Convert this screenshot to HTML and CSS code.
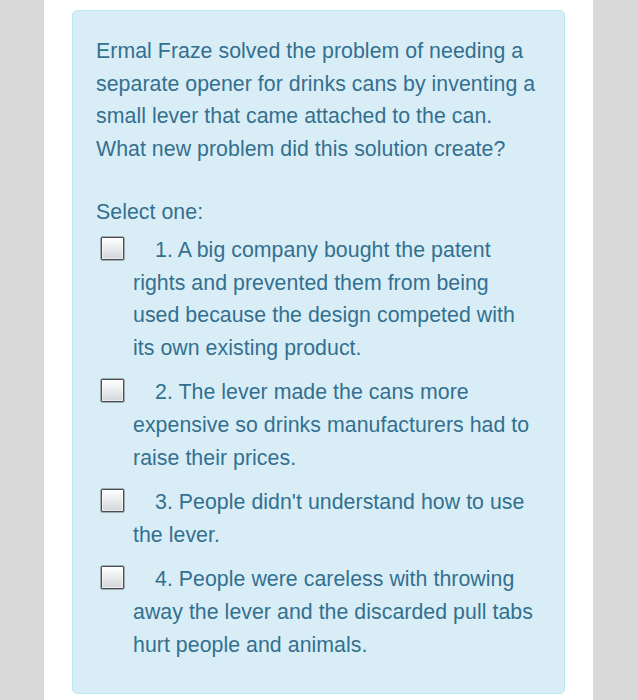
FILE: index.html
```html
<!DOCTYPE html>
<html lang="en">
<head>
<meta charset="utf-8">
<title>Question</title>
<link rel="stylesheet" href="styles.css">
</head>
<body>
<div class="page">
  <div class="card">
    <p class="question">Ermal Fraze solved the problem of needing a separate opener for drinks cans by inventing a small lever that came attached to the can. What new problem did this solution create?</p>
    <p class="prompt">Select one:</p>
    <div class="answers">
      <div class="option"><span class="box"></span>1. A big company bought the patent rights and prevented them from being used because the design competed with its own existing product.</div>
      <div class="option"><span class="box"></span>2. The lever made the cans more expensive so drinks manufacturers had to raise their prices.</div>
      <div class="option"><span class="box"></span>3. People didn't understand how to use the lever.</div>
      <div class="option"><span class="box"></span>4. People were careless with throwing away the lever and the discarded pull tabs hurt people and animals.</div>
    </div>
  </div>
</div>
</body>
</html>
```
FILE: styles.css
```css
html, body {
  margin: 0;
  padding: 0;
}
body {
  background: #d9d9d9;
  font-family: "Liberation Sans", Arial, sans-serif;
  font-size: 21.3px;
  line-height: 32.6px;
  color: #33708f;
}
.page {
  width: 549px;
  height: 700px;
  margin-left: 44px;
  background: #ffffff;
  padding-top: 10px;
  box-sizing: border-box;
}
.card {
  margin: 0 28px;
  background: #d9edf7;
  border: 1px solid #bce8f1;
  border-radius: 5px;
  padding: 24px 23px 32px 23px;
}
.question {
  margin: 0;
  letter-spacing: 0.05px;
}
.prompt {
  margin: 31px 0 0 0;
  letter-spacing: 0.05px;
}
.answers {
  margin-top: 5px;
  display: flex;
  flex-direction: column;
  gap: 12px;
}
.option {
  padding-left: 37px;
  text-indent: -32px;
  letter-spacing: 0.05px;
}
.box {
  display: inline-block;
  width: 21px;
  height: 21px;
  border: 1px solid #484d51;
  border-radius: 1px;
  background: linear-gradient(#ffffff, #d3d6d9);
  vertical-align: -3px;
  margin-right: 31px;
  text-indent: 0;
  box-shadow: inset 0 0 0 1px rgba(255,255,255,0.5), 0 0 0 0.5px #6a6f73;
}
```
